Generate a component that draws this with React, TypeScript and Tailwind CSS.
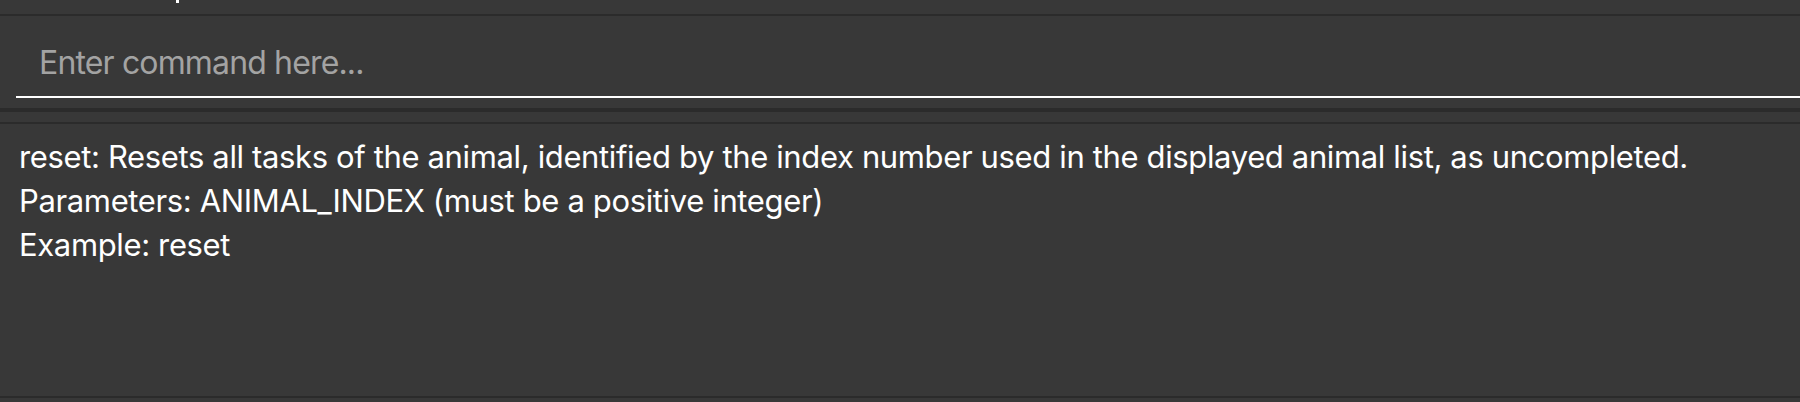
export default function App() {
  return (
    <div className="flex h-[402px] w-[1800px] flex-col overflow-hidden bg-[#383838] font-['Inter','Liberation_Sans',sans-serif]">
      {/* tail of the panel above */}
      <div className="h-[14px] shrink-0 pl-[176px]">
        <div className="h-[3px] w-[3px] bg-white" />
      </div>
      <div className="h-[2px] shrink-0 bg-[#2b2b2b]" />

      {/* command box */}
      <div className="shrink-0 pl-4">
        <input
          className="h-[82px] w-full border-b-2 border-white bg-transparent pl-[23px] pt-[12px] text-[32px] tracking-[-0.85px] text-white outline-none placeholder:text-[#a3a3a3]"
          placeholder="Enter command here..."
          readOnly
        />
      </div>
      <div className="h-[10px] shrink-0" />
      <div className="h-[4px] shrink-0 bg-[#2b2b2b]" />
      <div className="h-[10px] shrink-0" />
      <div className="h-[2px] shrink-0 bg-[#2b2b2b]" />

      {/* result display */}
      <div className="h-[272px] shrink-0 pl-[19px] pt-[11px] text-[31px] leading-[44px] tracking-[-0.36px] text-white">
        <div>reset: Resets all tasks of the animal, identified by the index number used in the displayed animal list, as uncompleted.</div>
        <div>Parameters: ANIMAL_INDEX (must be a positive integer)</div>
        <div>Example: reset</div>
      </div>
      <div className="h-[2px] shrink-0 bg-[#2b2b2b]" />
    </div>
  );
}
